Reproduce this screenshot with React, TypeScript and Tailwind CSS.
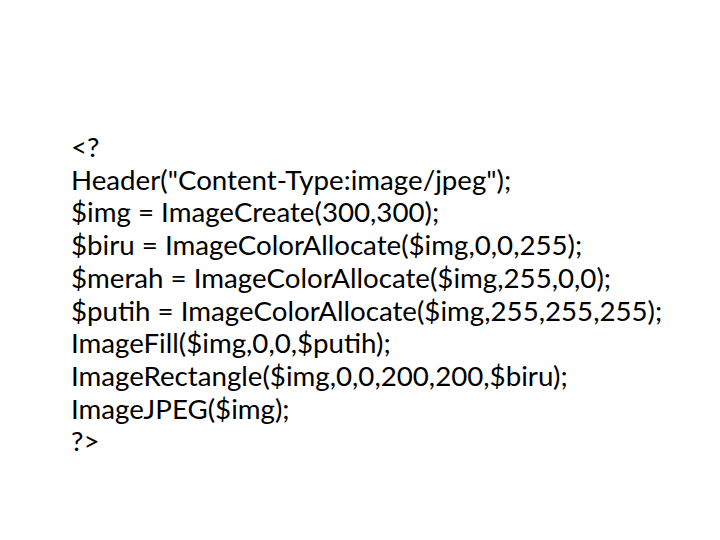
export default function App() {
  const lines = [
    "<?",
    'Header("Content-Type:image/jpeg");',
    "$img = ImageCreate(300,300);",
    "$biru = ImageColorAllocate($img,0,0,255);",
    "$merah = ImageColorAllocate($img,255,0,0);",
    "$putih = ImageColorAllocate($img,255,255,255);",
    "ImageFill($img,0,0,$putih);",
    "ImageRectangle($img,0,0,200,200,$biru);",
    "ImageJPEG($img);",
    "?>",
  ];
  return (
    <div className="w-[720px] h-[540px] bg-white overflow-hidden">
      <div className="pt-[131px] pl-[71px] flex flex-col text-black text-[27.7px] leading-[32.7px] font-['Lato',sans-serif] whitespace-pre">
        {lines.map((l, i) => (
          <div key={i}>{l}</div>
        ))}
      </div>
    </div>
  );
}
